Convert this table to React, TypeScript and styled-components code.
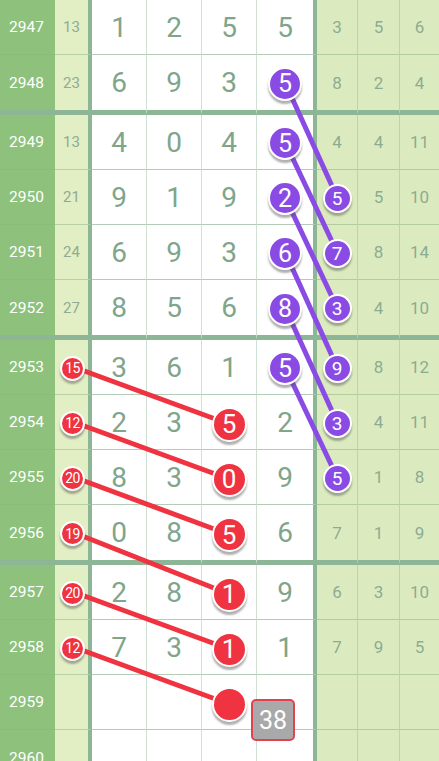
import { FC } from 'react'
import styled, { createGlobalStyle, css } from 'styled-components'

const GlobalStyle = createGlobalStyle`
  html, body { margin: 0; padding: 0; background: #fff; }
  body { font-family: 'Roboto', 'Noto Sans', sans-serif; overflow: hidden; }
`

type Mark = 'bigPurple' | 'smallPurple' | 'bigRed' | 'smallRed' | 'box'
type CellValue = string | { v: string; m: Mark }
type Kind = 'issue' | 'sum' | 'white' | 'green'

const BP = (v: string): CellValue => ({ v, m: 'bigPurple' })
const SP = (v: string): CellValue => ({ v, m: 'smallPurple' })
const BR = (v: string): CellValue => ({ v, m: 'bigRed' })
const SR = (v: string): CellValue => ({ v, m: 'smallRed' })
const BOX = (v: string): CellValue => ({ v, m: 'box' })

interface RowData { issue: number; sum: CellValue; d: CellValue[]; g: CellValue[] }

const rows: RowData[] = [
  { issue: 2947, sum: '13', d: ['1', '2', '5', '5'], g: ['3', '5', '6'] },
  { issue: 2948, sum: '23', d: ['6', '9', '3', BP('5')], g: ['8', '2', '4'] },
  { issue: 2949, sum: '13', d: ['4', '0', '4', BP('5')], g: ['4', '4', '11'] },
  { issue: 2950, sum: '21', d: ['9', '1', '9', BP('2')], g: [SP('5'), '5', '10'] },
  { issue: 2951, sum: '24', d: ['6', '9', '3', BP('6')], g: [SP('7'), '8', '14'] },
  { issue: 2952, sum: '27', d: ['8', '5', '6', BP('8')], g: [SP('3'), '4', '10'] },
  { issue: 2953, sum: SR('15'), d: ['3', '6', '1', BP('5')], g: [SP('9'), '8', '12'] },
  { issue: 2954, sum: SR('12'), d: ['2', '3', BR('5'), '2'], g: [SP('3'), '4', '11'] },
  { issue: 2955, sum: SR('20'), d: ['8', '3', BR('0'), '9'], g: [SP('5'), '1', '8'] },
  { issue: 2956, sum: SR('19'), d: ['0', '8', BR('5'), '6'], g: ['7', '1', '9'] },
  { issue: 2957, sum: SR('20'), d: ['2', '8', BR('1'), '9'], g: ['6', '3', '10'] },
  { issue: 2958, sum: SR('12'), d: ['7', '3', BR('1'), '1'], g: ['7', '9', '5'] },
  { issue: 2959, sum: '', d: ['', '', BR(''), BOX('38')], g: ['', '', ''] },
  { issue: 2960, sum: '', d: ['', '', '', ''], g: ['', '', ''] },
]

// column geometry (widths include right border)
const COLS = [55, 37, 55, 55, 55, 60, 41, 42, 39]
const X = { sum: 55 + 33 / 2, d3: 202 + 27, d4: 257 + 28, g1: 317 + 20 }

const isGroupEnd = (issue: number) => (issue - 2948) % 4 === 0
const contentH = (issue: number) => (isGroupEnd(issue) ? 55 : 54)
const borderH = (issue: number) => (isGroupEnd(issue) ? 5 : 1)

const centers: number[] = []
{
  let top = 0
  rows.forEach((r) => {
    centers.push(top + contentH(r.issue) / 2)
    top += contentH(r.issue) + borderH(r.issue)
  })
}

const purpleLinks = [1, 2, 3, 4, 5, 6].map((i) => [X.d4, centers[i], X.g1, centers[i + 2]])
const redLinks = [6, 7, 8, 9, 10, 11].map((i) => [X.sum, centers[i], X.d3, centers[i + 1]])

const THICK = '#8db697'

const Board = styled.div`
  position: relative;
  width: 439px;
  height: 761px;
  overflow: hidden;
`

const Row = styled.div`
  display: grid;
  grid-template-columns: ${COLS.map((c) => c + 'px').join(' ')};
`

const bgFor: Record<Kind, string> = {
  issue: '#8dc17c',
  sum: '#e2eec4',
  white: '#ffffff',
  green: '#dcebbf',
}
const lineFor: Record<Kind, string> = {
  issue: '#89bb79',
  sum: '#b8d0a5',
  white: '#b4ccb8',
  green: '#b2cc9d',
}

const Cell = styled.div<{ $kind: Kind; $right: string; $group: boolean; $h: number }>`
  box-sizing: border-box;
  height: ${(p) => p.$h}px;
  display: flex;
  align-items: center;
  justify-content: center;
  background: ${(p) => bgFor[p.$kind]};
  border-right: ${(p) => p.$right};
  border-bottom: ${(p) => (p.$group ? `5px solid ${THICK}` : `1px solid ${lineFor[p.$kind]}`)};
  ${(p) =>
    p.$kind === 'issue' &&
    css`
      color: #fff;
      font-size: 15.5px;
      padding-right: 2px;
    `}
  ${(p) =>
    p.$kind === 'sum' &&
    css`
      color: #8fab94;
      font-size: 15px;
    `}
  ${(p) =>
    p.$kind === 'white' &&
    css`
      color: #7fa58b;
      font-size: 28px;
    `}
  ${(p) =>
    p.$kind === 'green' &&
    css`
      color: #8dab92;
      font-size: 17px;
    `}
`

const ballSize: Record<string, number> = { bigPurple: 34, smallPurple: 29, bigRed: 35, smallRed: 25 }
const ballFont: Record<string, number> = { bigPurple: 25, smallPurple: 19, bigRed: 26, smallRed: 14 }

const Ball = styled.div<{ $m: Mark }>`
  position: relative;
  z-index: 2;
  box-sizing: border-box;
  width: ${(p) => ballSize[p.$m]}px;
  height: ${(p) => ballSize[p.$m]}px;
  border-radius: 50%;
  border: 2px solid #fff;
  background: ${(p) => (p.$m === 'bigRed' || p.$m === 'smallRed' ? '#ef3340' : '#8a4be4')};
  color: #fff;
  font-size: ${(p) => ballFont[p.$m]}px;
  display: flex;
  align-items: center;
  justify-content: center;
  box-shadow: 0 3px 2px rgba(80, 80, 80, 0.45);
  margin-left: ${(p) => (p.$m === 'smallRed' ? 2 : 0)}px;
  margin-top: ${(p) => (p.$m === 'bigRed' ? 4 : 2)}px;
  letter-spacing: ${(p) => (p.$m === 'smallRed' ? '-0.5px' : '0')};
`

const CountBox = styled.div`
  position: relative;
  z-index: 2;
  box-sizing: border-box;
  width: 44px;
  height: 42px;
  margin: 24px 0 0 -6px;
  align-self: flex-start;
  border: 2.5px solid #e2414f;
  border-radius: 5px;
  background: #a9a9a9;
  color: #fff;
  font-size: 25px;
  display: flex;
  align-items: center;
  justify-content: center;
`

const Lines = styled.svg`
  position: absolute;
  left: 0;
  top: 0;
  z-index: 1;
  pointer-events: none;
`

const Content: FC<{ value: CellValue }> = ({ value }) => {
  if (typeof value === 'string') return <>{value}</>
  if (value.m === 'box') return <CountBox>{value.v}</CountBox>
  return <Ball $m={value.m}>{value.v}</Ball>
}

const rightBorder = (i: number) => {
  if (i === 1 || i === 5) return `4px solid ${THICK}`
  if (i >= 2 && i <= 4) return '1px solid #d0e0d3'
  if (i === 6 || i === 7) return '1px solid #bcd4aa'
  return 'none'
}

export default function App() {
  return (
    <>
      <GlobalStyle />
      <Board>
        {rows.map((r) => {
          const group = isGroupEnd(r.issue)
          const h = contentH(r.issue) + borderH(r.issue)
          const cells: [Kind, CellValue][] = [
            ['issue', String(r.issue)],
            ['sum', r.sum],
            ...r.d.map((v): [Kind, CellValue] => ['white', v]),
            ...r.g.map((v): [Kind, CellValue] => ['green', v]),
          ]
          return (
            <Row key={r.issue}>
              {cells.map(([kind, v], i) => (
                <Cell
                  key={i}
                  $kind={kind}
                  $right={rightBorder(i)}
                  $group={group}
                  $h={h}
                  style={i === 5 && typeof v === 'object' && v.m === 'box' ? { justifyContent: 'flex-start' } : undefined}
                >
                  <Content value={v} />
                </Cell>
              ))}
            </Row>
          )
        })}
        <Lines width={439} height={761}>
          {purpleLinks.map(([x1, y1, x2, y2], i) => (
            <line key={'p' + i} x1={x1} y1={y1} x2={x2} y2={y2} stroke="#8a4be4" strokeWidth={5} />
          ))}
          {redLinks.map(([x1, y1, x2, y2], i) => (
            <line key={'r' + i} x1={x1 + 2} y1={y1} x2={x2} y2={y2 + 2} stroke="#ef3340" strokeWidth={5} />
          ))}
        </Lines>
      </Board>
    </>
  )
}
